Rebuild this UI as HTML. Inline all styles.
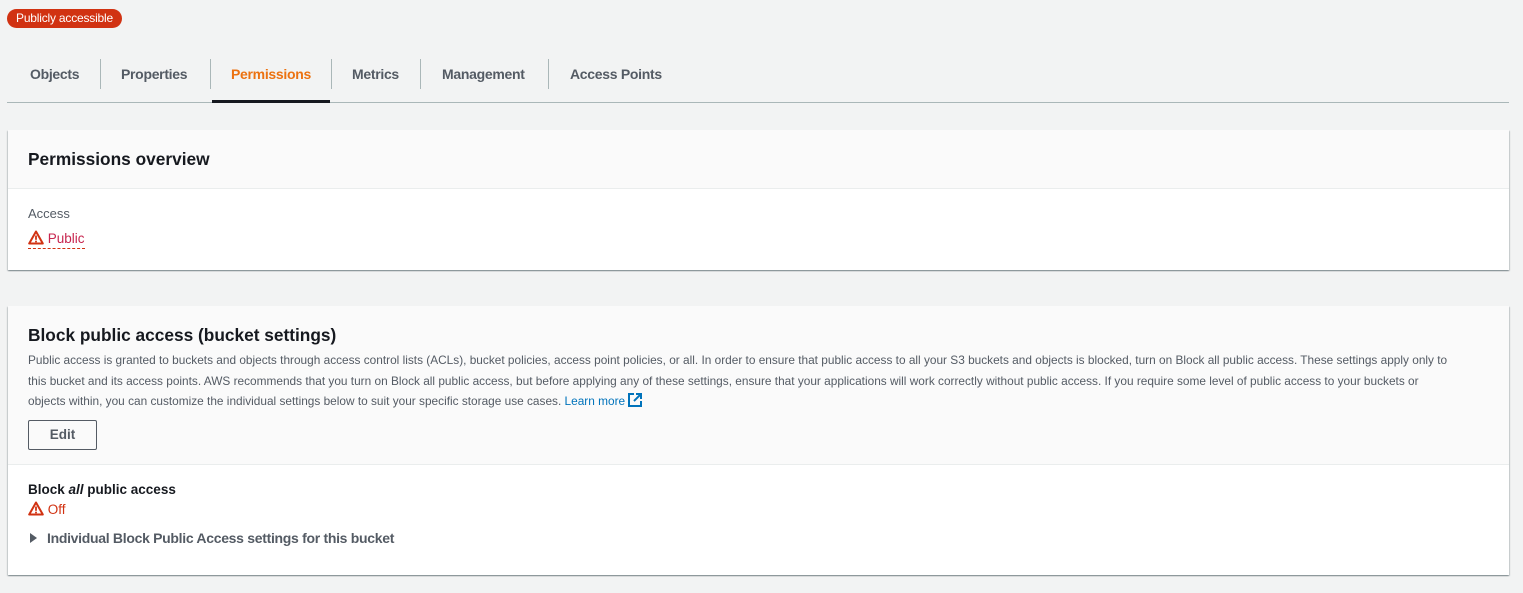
<!DOCTYPE html>
<html><head><style>
body{margin:0;background:#f2f3f3;font-family:"Liberation Sans",sans-serif;color:#16191f;width:1523px;height:593px;overflow:hidden;position:relative}
.a{position:absolute}
.badge{left:7px;top:9px;width:115px;height:19px;background:#d13212;border-radius:10px;color:#fff;font-size:12px;line-height:19px;text-align:center;letter-spacing:-0.2px}
.tab{top:64px;font-size:14px;font-weight:bold;color:#545b64;line-height:20px;letter-spacing:-0.3px}
.sep{top:59px;width:1px;height:30px;background:#aab7b8}
.card{left:8px;width:1501px;background:#fff;box-shadow:0 1px 1px 0 rgba(0,28,36,.3),1px 1px 1px 0 rgba(0,28,36,.15),-1px 1px 1px 0 rgba(0,28,36,.15)}
.hd{background:#fafafa;border-bottom:1px solid #eaeded}
p{margin:0}
</style></head><body>
<div class="a badge">Publicly accessible</div>
<div class="a tab" style="left:30px">Objects</div>
<div class="a sep" style="left:100px"></div>
<div class="a tab" style="left:121px">Properties</div>
<div class="a sep" style="left:210px"></div>
<div class="a tab" style="left:231px;color:#ec7211">Permissions</div>
<div class="a sep" style="left:331px"></div>
<div class="a tab" style="left:352px">Metrics</div>
<div class="a sep" style="left:420px"></div>
<div class="a tab" style="left:442px">Management</div>
<div class="a sep" style="left:548px"></div>
<div class="a tab" style="left:570px">Access Points</div>
<div class="a" style="left:7px;top:102px;width:1502px;height:1px;background:#aab7b8"></div>
<div class="a" style="left:212px;top:100px;width:118px;height:3px;background:#16191f"></div>

<div class="a card" style="top:130px;height:140px">
 <div class="hd" style="height:58px"><div class="a" style="left:20px;top:19px;font-size:17.3px;font-weight:bold">Permissions overview</div></div>
 <div class="a" style="left:20px;top:76px;font-size:13px;color:#545b64">Access</div>
 <div class="a" style="left:20px;top:100px;font-size:13.5px;color:#d13212;border-bottom:1px dashed #d13212;line-height:18px">
  <svg width="16" height="15" viewBox="0 0 16 15" style="vertical-align:-2px"><path d="M8 1.5L1.2 13.5h13.6z" fill="none" stroke="#d13212" stroke-width="2" stroke-linejoin="round"/><rect x="7.1" y="5.5" width="1.8" height="4.3" fill="#d13212"/><rect x="7.1" y="10.7" width="1.8" height="1.6" fill="#d13212"/></svg> <span style="color:#c7254e">Public</span></div>
</div>

<div class="a card" style="top:306px;height:269px">
 <div class="hd" style="height:158px">
  <div class="a" style="left:20px;top:19px;font-size:17.3px;font-weight:bold">Block public access (bucket settings)</div>
  <div class="a" style="left:20px;top:44px;width:1480px;font-size:11.85px;line-height:20.5px;color:#545b64;letter-spacing:0">
  <p style="white-space:nowrap">Public access is granted to buckets and objects through access control lists (ACLs), bucket policies, access point policies, or all. In order to ensure that public access to all your S3 buckets and objects is blocked, turn on Block all public access. These settings apply only to</p>
  <p style="white-space:nowrap">this bucket and its access points. AWS recommends that you turn on Block all public access, but before applying any of these settings, ensure that your applications will work correctly without public access. If you require some level of public access to your buckets or</p>
  <p style="white-space:nowrap">objects within, you can customize the individual settings below to suit your specific storage use cases. <span style="color:#0073bb">Learn more</span> <svg width="14" height="14" viewBox="0 0 14 14" style="vertical-align:-2px"><path d="M6 1H1v12h12V8" fill="none" stroke="#0073bb" stroke-width="2"/><path d="M8 1h5v5M13 1L6 8" fill="none" stroke="#0073bb" stroke-width="2"/></svg></p>
  </div>
  <div class="a" style="left:20px;top:114px;width:67px;height:28px;border:1px solid #545b64;border-radius:2px;font-size:13.5px;font-weight:bold;color:#545b64;text-align:center;line-height:28px">Edit</div>
 </div>
 <div class="a" style="left:20px;top:176px;font-size:13.5px;font-weight:bold">Block <i>all</i> public access</div>
 <div class="a" style="left:20px;top:195px;font-size:13.5px;color:#d13212"><svg width="16" height="15" viewBox="0 0 16 15" style="vertical-align:-2px"><path d="M8 1.5L1.2 13.5h13.6z" fill="none" stroke="#d13212" stroke-width="2" stroke-linejoin="round"/><rect x="7.1" y="5.5" width="1.8" height="4.3" fill="#d13212"/><rect x="7.1" y="10.7" width="1.8" height="1.6" fill="#d13212"/></svg> Off</div>
 <div class="a" style="left:21px;top:224px;font-size:14px;font-weight:bold;color:#545b64;letter-spacing:-0.3px"><svg width="9" height="10" viewBox="0 0 9 10" style="margin-right:9px"><path d="M1 0l7 5-7 5z" fill="#545b64"/></svg>Individual Block Public Access settings for this bucket</div>
</div>
</body></html>
